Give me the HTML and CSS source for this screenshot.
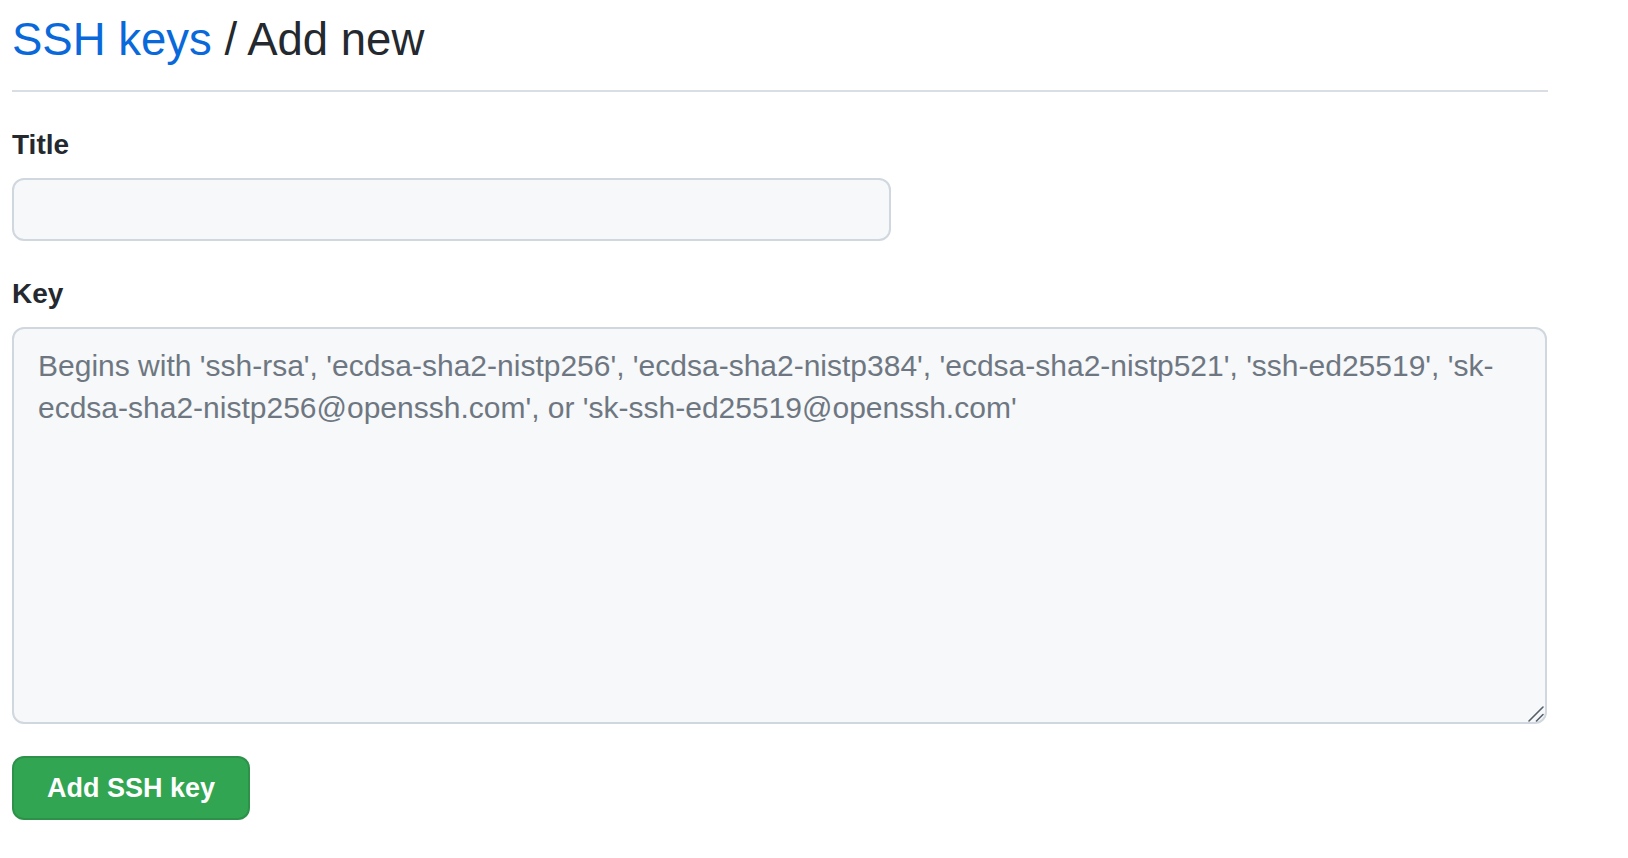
FILE: index.html
```html
<!DOCTYPE html>
<html lang="en">
<head>
<meta charset="utf-8">
<title>SSH keys / Add new</title>
<link rel="stylesheet" href="styles.css">
</head>
<body>
<div class="page">
  <div class="subhead">
    <h1 class="subhead-heading"><a class="crumb" href="#">SSH keys</a> / Add new</h1>
  </div>
  <form class="form">
    <label class="form-label" for="title">Title</label>
    <input class="form-input title-input" id="title" type="text">
    <label class="form-label key-label" for="key">Key</label>
    <div class="textarea-wrap">
      <textarea class="form-input key-input" id="key" placeholder="Begins with 'ssh-rsa', 'ecdsa-sha2-nistp256', 'ecdsa-sha2-nistp384', 'ecdsa-sha2-nistp521', 'ssh-ed25519', 'sk-ecdsa-sha2-nistp256@openssh.com', or 'sk-ssh-ed25519@openssh.com'"></textarea>
      <svg class="grip" width="16" height="16" viewBox="0 0 16 16" aria-hidden="true">
        <line x1="1" y1="15" x2="15" y2="1" />
        <line x1="8.5" y1="15" x2="15" y2="8.5" />
      </svg>
    </div>
    <div class="actions">
      <button class="btn-primary" type="button">Add SSH key</button>
    </div>
  </form>
</div>
</body>
</html>
```

FILE: styles.css
```css
html, body {
  margin: 0;
  padding: 0;
  background: #ffffff;
}

body {
  font-family: "Liberation Sans", Arial, Helvetica, sans-serif;
  color: #24292f;
}

.page {
  width: 1536px;
  padding: 4px 0 0 12px;
}

.subhead {
  border-bottom: 2px solid #d8dee4;
  padding-bottom: 14px;
}

.subhead-heading {
  margin: 0;
  font-size: 45.5px;
  line-height: 72px;
  font-weight: 400;
  color: #24292f;
}

.crumb {
  color: #0969da;
  text-decoration: none;
}

.form {
  display: flex;
  flex-direction: column;
  align-items: flex-start;
}

.form-label {
  display: block;
  margin-top: 33px;
  margin-bottom: 13px;
  font-size: 28px;
  line-height: 40px;
  font-weight: 700;
  color: #24292f;
}

.key-label {
  margin-top: 33px;
}

.form-input {
  box-sizing: border-box;
  margin: 0;
  background: #f6f8fa;
  border: 2px solid #d0d7de;
  border-radius: 12px;
  font-family: "Liberation Sans", Arial, Helvetica, sans-serif;
  font-size: 30px;
  line-height: 42px;
  color: #24292f;
  outline: none;
}

.title-input {
  width: 879px;
  height: 63px;
  padding: 10px 24px;
}

.textarea-wrap {
  position: relative;
  display: flex;
}

.key-input {
  width: 1535px;
  height: 397px;
  padding: 16px 24px 14px;
  resize: none;
}

.key-input::placeholder {
  color: #6e7781;
  opacity: 1;
}

.grip {
  position: absolute;
  right: 3px;
  bottom: 2px;
  stroke: #57606a;
  stroke-width: 1.6;
  stroke-linecap: round;
}

.actions {
  margin-top: 32px;
}

.btn-primary {
  box-sizing: border-box;
  height: 64px;
  padding: 0 33px;
  background: #31a552;
  border: 2px solid rgba(27, 31, 36, 0.15);
  border-radius: 12px;
  color: #ffffff;
  font-family: "Liberation Sans", Arial, Helvetica, sans-serif;
  font-size: 27px;
  font-weight: 700;
  line-height: 40px;
  cursor: pointer;
}
```
